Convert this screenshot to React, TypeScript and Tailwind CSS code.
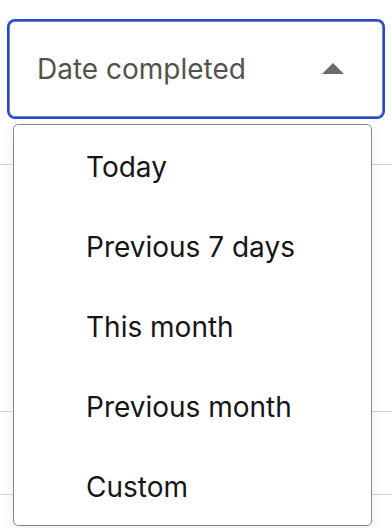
import { useState } from 'react'

const OPTIONS = ['Today', 'Previous 7 days', 'This month', 'Previous month', 'Custom']

export default function App() {
  const [open, setOpen] = useState(true)
  const [value, setValue] = useState<string | null>(null)

  return (
    <div
      className="relative w-[392px] h-[528px] overflow-hidden bg-white"
      style={{ fontFamily: 'Inter, "Noto Sans", sans-serif' }}
    >
      <div className="px-[9px] pt-[21px]">
        <button
          onClick={() => setOpen(!open)}
          className="flex h-[96px] w-full items-center justify-between rounded-[6px] border-[1.5px] border-[#85857f] bg-white pb-px pl-[27px] pr-[38px] text-[28px] text-[#53534e] shadow-[0_0_0_2px_#1f45f2] outline-none"
        >
          <span>{value ?? 'Date completed'}</span>
          <svg width="22" height="11" viewBox="0 0 22 11" className={open ? '' : 'rotate-180'}>
            <path d="M11 0 L22 11 L0 11 Z" fill="#6b6b68" />
          </svg>
        </button>
      </div>

      <div className="mt-[47px]">
        <div className="h-[248px] border-y border-[#d2d2cd]" />
        <div className="h-[83px] border-b border-[#d2d2cd]" />
      </div>

      {open && (
        <ul className="absolute left-[13px] top-[124px] w-[359px] rounded-[5px] border-[1.5px] border-[#8a8a84] bg-white shadow-[0_4px_14px_rgba(0,0,0,0.08)]">
          {OPTIONS.map((o) => (
            <li key={o}>
              <button
                onClick={() => { setValue(o); setOpen(false) }}
                className="flex h-[80px] w-full items-center pl-[72px] pt-[3px] text-left text-[28px] text-[#161616]"
              >
                {o}
              </button>
            </li>
          ))}
        </ul>
      )}
    </div>
  )
}
